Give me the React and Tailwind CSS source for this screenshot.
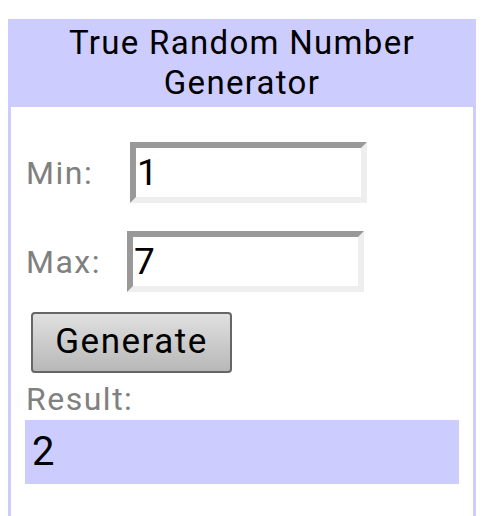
import { useState } from "react";

export default function App() {
  const [min, setMin] = useState("1");
  const [max, setMax] = useState("7");
  const [result, setResult] = useState(2);

  const generate = () => {
    const lo = parseInt(min, 10) || 0;
    const hi = parseInt(max, 10) || 0;
    setResult(lo + Math.floor(Math.random() * (hi - lo + 1)));
  };

  const inputClass =
    "h-[61px] w-[237px] border-[6px] border-t-[#999] border-l-[#999] border-b-[#eee] border-r-[#eee] bg-white px-px text-[37px] leading-none text-black outline-none";

  return (
    <div className="min-h-screen bg-white px-2 pt-[19px] font-['Roboto','Liberation_Sans',sans-serif]">
      <div className="min-h-[497px] border-x-[3px] border-[#ccccff]">
        {/* Header */}
        <h1 className="-mx-[3px] bg-[#ccccff] pt-[4px] pb-[4px] text-center text-[33px] leading-[40px] tracking-[1.3px] text-black">
          True Random Number
          <br />
          Generator
        </h1>

        <div className="px-[14px] pt-[35px]">
          <div className="flex items-center">
            <span className="w-[105px] pl-px text-[32px] tracking-[1.5px] text-[#808080]">Min:</span>
            <input
              type="text"
              value={min}
              onChange={(e) => setMin(e.target.value)}
              className={inputClass}
            />
          </div>

          <div className="mt-[28px] flex items-center">
            <span className="w-[102px] pl-px text-[32px] tracking-[1.5px] text-[#808080]">Max:</span>
            <input
              type="text"
              value={max}
              onChange={(e) => setMax(e.target.value)}
              className={inputClass}
            />
          </div>

          <button
            onClick={generate}
            className="mt-[20px] ml-[6px] h-[61px] w-[201px] rounded-[4px] border-2 border-[#666] bg-gradient-to-b from-[#e0e0e0] to-[#b8b8b8] text-[35px] tracking-[1.5px] text-black"
          >
            Generate
          </button>

          <div className="mt-[8px] pl-px text-[32px] leading-[36px] tracking-[1.5px] text-[#808080]">
            Result:
          </div>
          <div className="mt-[3px] flex h-[64px] items-center bg-[#ccccff] px-[7px] text-[40px] text-black">
            {result}
          </div>
        </div>
      </div>
    </div>
  );
}
